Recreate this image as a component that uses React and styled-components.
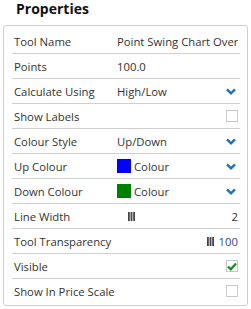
import React from "react";
import styled, { createGlobalStyle } from "styled-components";

const Global = createGlobalStyle`
  html, body { margin: 0; padding: 0; background: #fff; }
  body { font-family: "Open Sans", "Liberation Sans", sans-serif; color: #333; }
`;

const Page = styled.div`
  width: 251px;
  height: 309px;
  overflow: hidden;
`;

const Title = styled.h1`
  margin: 0 0 7px 0;
  padding-left: 16px;
  font-size: 14px;
  line-height: 18px;
  font-weight: 700;
  color: #111;
`;

const Card = styled.div`
  margin-left: 3px;
  width: 245px;
  box-sizing: border-box;
  border: 1px solid #cfcfcf;
  border-radius: 3px;
  padding: 3px 7px 2px 8px;
`;

const Row = styled.div`
  display: grid;
  grid-template-columns: 103px 1fr;
  align-items: center;
  height: 24px;
  padding: 0 2px;
  border-bottom: 1px solid #d0d0d0;
  font-size: 11.3px;
  &:last-child { border-bottom: none; }
`;

const Label = styled.div`
  color: #333;
  white-space: nowrap;
`;

const Value = styled.div`
  display: flex;
  align-items: center;
  justify-content: ${(p) => p.$justify || "flex-start"};
  gap: ${(p) => p.$gap || 0}px;
  min-width: 0;
  overflow: hidden;
  white-space: nowrap;
  color: #333;
`;

const Text = styled.span`
  color: ${(p) => p.$color || "#333"};
`;

const Swatch = styled.span`
  width: 14px;
  height: 14px;
  background: ${(p) => p.$color};
  flex: none;
`;

const Group = styled.span`
  display: flex;
  align-items: center;
  gap: ${(p) => p.$gap || 0}px;
  margin-left: ${(p) => p.$ml || 0}px;
`;

const Box = styled.span`
  width: 12px;
  height: 12px;
  box-sizing: border-box;
  border: 1px solid #c8c8c8;
  background: #fff;
  display: flex;
  align-items: center;
  justify-content: center;
`;

const Chevron = () => (
  <svg width="10" height="7" viewBox="0 0 10 7" style={{ marginRight: 2, flex: "none" }}>
    <path d="M1 1.3 L5 5.3 L9 1.3" fill="none" stroke="#1e6fbe" strokeWidth="2.4" strokeLinejoin="miter" />
  </svg>
);

const Bars = () => (
  <svg width="7" height="9" viewBox="0 0 7 9">
    <rect x="0" y="0" width="1.8" height="9" fill="#444" />
    <rect x="2.6" y="0" width="1.8" height="9" fill="#444" />
    <rect x="5.2" y="0" width="1.8" height="9" fill="#444" />
  </svg>
);

const Check = () => (
  <svg width="10" height="9" viewBox="0 0 10 9">
    <path d="M1 4.6 L3.8 7.3 L9 1.4" fill="none" stroke="#218a21" strokeWidth="2.2" />
  </svg>
);

export default function App() {
  return (
    <Page>
      <Global />
      <Title>Properties</Title>
      <Card>
        <Row>
          <Label>Tool Name</Label>
          <Value><Text>Point Swing Chart Over</Text></Value>
        </Row>
        <Row>
          <Label>Points</Label>
          <Value><Text>100.0</Text></Value>
        </Row>
        <Row>
          <Label>Calculate Using</Label>
          <Value $justify="space-between"><Text>High/Low</Text><Chevron /></Value>
        </Row>
        <Row>
          <Label>Show Labels</Label>
          <Value $justify="flex-end"><Box /></Value>
        </Row>
        <Row>
          <Label>Colour Style</Label>
          <Value $justify="space-between"><Text>Up/Down</Text><Chevron /></Value>
        </Row>
        <Row>
          <Label>Up Colour</Label>
          <Value $justify="space-between">
            <Group $gap={3}><Swatch $color="#0000ff" /><Text>Colour</Text></Group>
            <Chevron />
          </Value>
        </Row>
        <Row>
          <Label>Down Colour</Label>
          <Value $justify="space-between">
            <Group $gap={3}><Swatch $color="#008000" /><Text>Colour</Text></Group>
            <Chevron />
          </Value>
        </Row>
        <Row>
          <Label>Line Width</Label>
          <Value $justify="space-between">
            <Group $ml={11}><Bars /></Group>
            <Text>2</Text>
          </Value>
        </Row>
        <Row>
          <Label>Tool Transparency</Label>
          <Value $justify="flex-end">
            <Group $gap={5}><Bars /><Text $color="#3a4872">100</Text></Group>
          </Value>
        </Row>
        <Row>
          <Label>Visible</Label>
          <Value $justify="flex-end"><Box><Check /></Box></Value>
        </Row>
        <Row>
          <Label>Show In Price Scale</Label>
          <Value $justify="flex-end"><Box /></Value>
        </Row>
      </Card>
    </Page>
  );
}
